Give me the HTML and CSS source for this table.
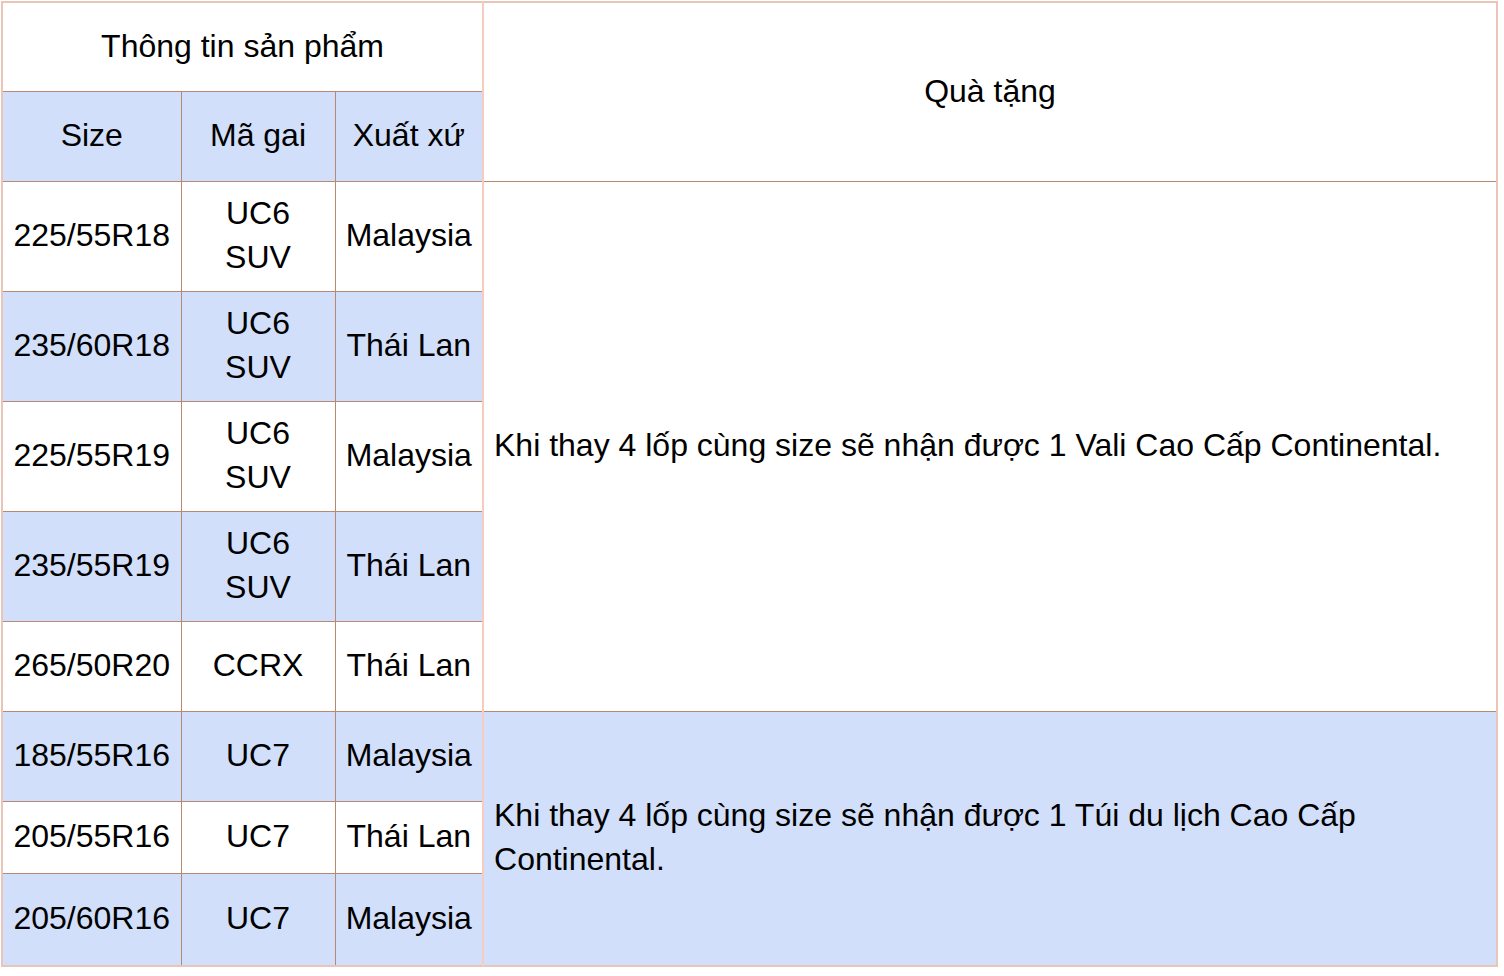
FILE: index.html
```html
<!DOCTYPE html>
<html lang="vi">
<head>
<meta charset="utf-8">
<title>Bảng quà tặng</title>
<link rel="stylesheet" href="styles.css">
</head>
<body>
<table class="gift-table">
  <colgroup>
    <col class="c-size">
    <col class="c-code">
    <col class="c-origin">
    <col class="c-gift">
  </colgroup>
  <tr class="h-row1">
    <td colspan="3" class="white">Thông tin sản phẩm</td>
    <td rowspan="2" class="white gift">Quà tặng</td>
  </tr>
  <tr class="h-row2">
    <td class="blue">Size</td>
    <td class="blue">Mã gai</td>
    <td class="blue">Xuất xứ</td>
  </tr>
  <tr class="r-tall">
    <td class="white">225/55R18</td>
    <td class="white">UC6 SUV</td>
    <td class="white">Malaysia</td>
    <td rowspan="5" class="white gift text-left">Khi thay 4 lốp cùng size sẽ nhận được 1 Vali Cao Cấp Continental.</td>
  </tr>
  <tr class="r-tall">
    <td class="blue">235/60R18</td>
    <td class="blue">UC6 SUV</td>
    <td class="blue">Thái Lan</td>
  </tr>
  <tr class="r-tall">
    <td class="white">225/55R19</td>
    <td class="white">UC6 SUV</td>
    <td class="white">Malaysia</td>
  </tr>
  <tr class="r-tall">
    <td class="blue">235/55R19</td>
    <td class="blue">UC6 SUV</td>
    <td class="blue">Thái Lan</td>
  </tr>
  <tr class="r-mid">
    <td class="white">265/50R20</td>
    <td class="white">CCRX</td>
    <td class="white">Thái Lan</td>
  </tr>
  <tr class="r-mid">
    <td class="blue">185/55R16</td>
    <td class="blue">UC7</td>
    <td class="blue">Malaysia</td>
    <td rowspan="3" class="blue gift text-left">Khi thay 4 lốp cùng size sẽ nhận được 1 Túi du lịch Cao Cấp Continental.</td>
  </tr>
  <tr class="r-short">
    <td class="white">205/55R16</td>
    <td class="white">UC7</td>
    <td class="white">Thái Lan</td>
  </tr>
  <tr class="r-last">
    <td class="blue">205/60R16</td>
    <td class="blue">UC7</td>
    <td class="blue">Malaysia</td>
  </tr>
</table>
</body>
</html>
```

FILE: styles.css
```css
html, body {
  margin: 0;
  padding: 0;
  background: #ffffff;
}

body {
  padding: 1px 0 0 1px;
  font-family: "Liberation Sans", Arial, sans-serif;
  color: #000000;
}

.gift-table {
  border-collapse: collapse;
  table-layout: fixed;
  width: 1497px;
  border: 2px solid #eac4b6;
  font-size: 32px;
  line-height: 44px;
}

.c-size { width: 179px; }
.c-code { width: 154px; }
.c-origin { width: 148px; }
.c-gift { width: auto; }

.gift-table td {
  border: 1px solid #b98870;
  padding: 0 10px 2px;
  text-align: center;
  vertical-align: middle;
  overflow: hidden;
}

.gift-table td.gift {
  border-left: 2px solid #f4cdc0;
}

.gift-table td.text-left {
  text-align: left;
}

.white { background: #ffffff; }
.blue { background: #d2dffa; }

.h-row1 { height: 89px; }
.h-row2 { height: 90px; }
.r-tall { height: 110px; }
.r-mid { height: 90px; }
.r-short { height: 72px; }
.r-last { height: 93px; }
```
